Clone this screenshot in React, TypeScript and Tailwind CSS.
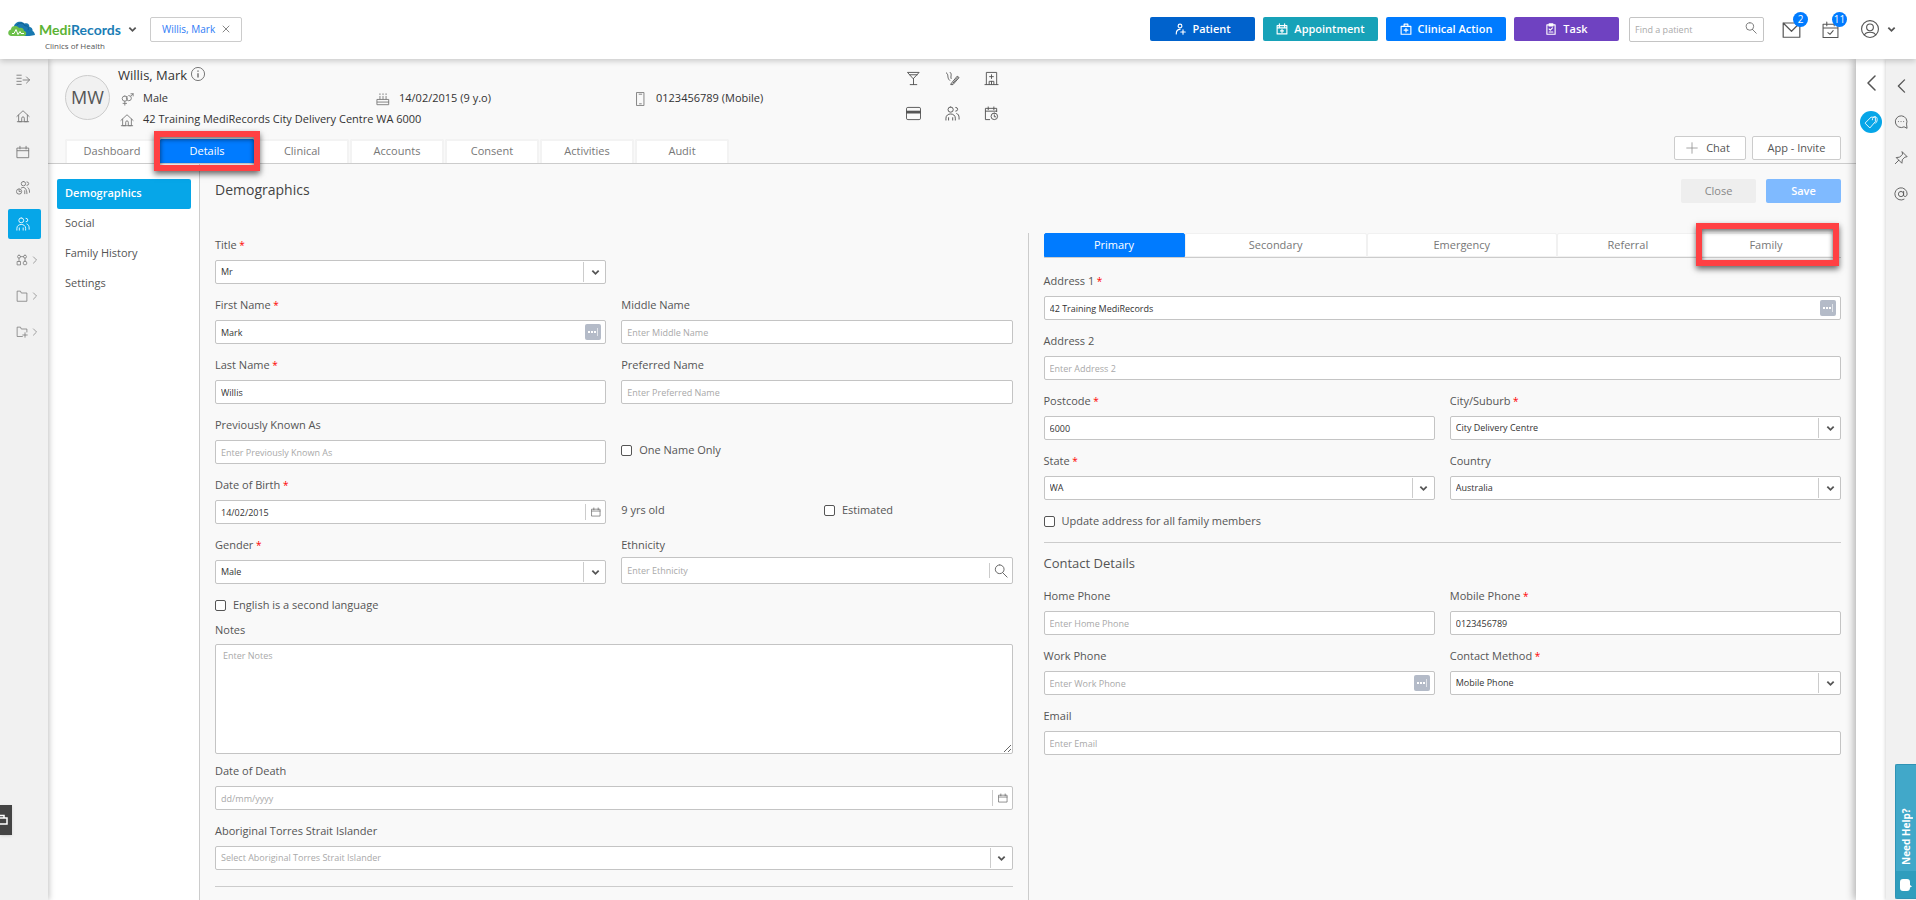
import { useId } from "react"
import type { ReactNode } from "react"

type IconProps = { d: string; size?: string; className?: string; weight?: number }

const Icon = ({ d, size = "size-4", className = "", weight = 1 }: IconProps) => (
  <svg
    viewBox="0 0 16 16"
    className={`${size} shrink-0 ${className}`}
    fill="none"
    stroke="currentColor"
    strokeWidth={weight}
    strokeLinecap="round"
    strokeLinejoin="round"
    aria-hidden="true"
  >
    <path d={d} />
  </svg>
)

const ICONS = {
  collapse: "M1 2.500h5M1 6h5M1 9.500h5M1 13h5M8 8h7.500M12 4.500l3.500 3.500l-3.500 3.500",
  home: "M1 8.500L8 2l7 6.500M3 7v7.500h3.500v-4a1.500 1.500 0 0 1 3 0v4H13V7M1.500 14.500h13",
  calendar: "M1.500 3.500h13v11h-13zM1.500 6.500h13M4.500 1.500v3M11.500 1.500v3",
  waiting: "M8.500 .5a2.500 2.500 0 1 1 0 5a2.500 2.500 0 1 1 0 -5M12.500 1a2 2 0 0 1 0 4M3.500 9a3 3 0 1 1 0 6a3 3 0 1 1 0 -6M3.500 10.500v1.500h1.500M6 8c3-2 6.500 0 6.500 6.500M10 11v3.500M13.500 7.500c1.500 1 2 3 2 5.500",
  people: "M6 1a2.800 2.800 0 1 1 0 5.600a2.800 2.800 0 1 1 0 -5.600M11.500 1.500a2 2 0 1 1 0 4M1 15v-2c0-6 10-6 10 0V15M3.800 15v-2.500M8.200 15v-2.500M12.500 8c1.500 .5 2.500 2 2.500 4.500v1.500",
  modules: "M4 1.500a2 2 0 1 1 0 4a2 2 0 1 1 0 -4M12 1.500a2 2 0 1 1 0 4a2 2 0 1 1 0 -4M6 3.500h4M2 10h4v4.500H2zM12 9.500a2.500 2.500 0 1 1 0 5a2.500 2.500 0 1 1 0 -5M4 5.500V10M12 5.500v4",
  folder: "M1.500 14.500v-13h4.500l1 2.500h7.500v10.500z",
  folderPlus: "M8.500 14H1.500v-12.500h4.500l1 2.500h7.500V8M12 9v6M9 12h6",
  gender: "M5.500 4.500a3 3 0 1 1 0 6a3 3 0 1 1 0 -6M10 4a3 3 0 1 1 0 6a3 3 0 0 1 -2 -5M12.500 4.500L15 2M12.500 2H15v2.500M5.500 10.500v4.500M3.500 13h4",
  cake: "M1.500 8.500h13v6h-13zM1.500 11.500h13M4.500 5v3M8 5v3M11.500 5v3M4.500 2v1M8 2v1M11.500 2v1",
  phone: "M4.500 .5h8v15h-8zM7 2.500h3M7.500 13.500h2",
  glass: "M2 1.500h12L8 8zM4 4h8M8 8v6.500M4.500 14.500h7",
  smoke: "M1.500 2c3 2 0 5 3.500 8M5.500 1.500c2.500 2 0 4 1 6.500M6.500 13.500l6.500-8l2 1.500l-6.500 7.500h-2zM8.500 13l5-6",
  hospital: "M2.500 14.500v-13h11v13M1 14.500h14M8 4v4M6 6h4M5.500 14.500v-3.500h5v3.500M8 11v3.500",
  recall: "M13.500 6V2.500h-12v12H6M1.500 5.500h12M4.500 1v3M10.500 1v3M11 7.500a3.500 3.500 0 1 1 0 7a3.500 3.500 0 1 1 0 -7M11 9.500v2h1.500",
  search: "M6.500 1a5 5 0 1 1 0 10a5 5 0 1 1 0 -10M10 10l5 5",
  patientPlus: "M8 1.500a2.500 2.500 0 1 1 0 5a2.500 2.500 0 1 1 0 -5M3 14.500c0-4 1.500-6 5-6M12 9v6M9 12h6",
  calendarPlus: "M1.500 3.500h13v11h-13zM1.500 6.500h13M4.500 1v4M11.500 1v4M8 8.500v4M6 10.500h4",
  clinical: "M1.500 4.500h13v10.500H1.500zM5.500 4.500v-3h5v3M8 7v5M5.500 9.500h5",
  task: "M2.500 2.500h11v12.500h-11zM5.500 1h5v3h-5zM5.500 8l1.500 1.500l3-3M5.500 12h5",
  mail: "M1 2.500h14v12H1zM1 2.500l7 7l7-7",
  calendarCheck: "M1 3h14v12.500H1zM1 6.500h14M4.500 1v3.500M11.500 1v3.500M5.500 11l2 1.500l3-3.500",
  user: "M8 .5a7.500 7.500 0 1 1 0 15a7.500 7.500 0 1 1 0 -15M8 3.500a3 3 0 1 1 0 6a3 3 0 1 1 0 -6M3 13.500c1-3.500 9-3.500 10 0",
  chat: "M14.500 15l-3-1.500A6.700 6.700 0 1 1 14.500 10zM5 7.500h.1M8 7.500h.1M11 7.500h.1",
  pin: "M9.500 1l5.500 5.500l-2.500 .5l-3 3l-.5 4L2.500 7.500l4-.5l3-3zM5.500 10.500L1.500 14.500",
  at: "M8 5a3 3 0 1 1 0 6a3 3 0 1 1 0 -6M11 5v4.500c0 2 4 2 4-1.500A7 7 0 1 0 11.500 14",
  tag: "M1.500 9l6.500-6.500h5v5L7 14.500zM9.500 5.500c0-5 6-5 5.500 0c0 2-1 3-2 4",
  left: "M12 1L5 8L12 15",
  right: "M5.500 3l5 5l-5 5",
  cross: "M2 2l12 12M14 2L2 14",
  plus: "M8 1v14M1 8h14",
}

const Chevron = ({ className = "" }: { className?: string }) => (
  <svg viewBox="0 0 10 10" className={`size-[9px] shrink-0 ${className}`} fill="none" stroke="currentColor" strokeWidth="2" aria-hidden="true">
    <path d="M1.500 3l3.500 3.500l3.500-3.500" />
  </svg>
)

const Highlight = ({ className = "" }: { className?: string }) => (
  <span
    className={`pointer-events-none absolute z-10 border-6 border-[#ff4043] shadow-[0_3px_6px_rgba(0,0,0,0.6),inset_0_2px_5px_rgba(0,0,0,0.6)] ${className}`}
  />
)

const inputClass =
  "w-full rounded-xs border border-[#c4c4c4] bg-white px-[5px] text-[9px] text-[#333] placeholder:text-[#a9a9a9]"

const Label = ({ id, text, required }: { id: string; text: string; required?: boolean }) => (
  <label htmlFor={id} className="block h-4 text-[11px] leading-4 whitespace-nowrap">
    {text}
    {required && <span className="text-[10px] text-[#f00]"> *</span>}
  </label>
)

type FieldProps = { label: string; value?: string; hint?: string; required?: boolean; filler?: boolean; end?: ReactNode; className?: string }

const TextField = ({ label, value, hint, required, filler, end, className = "" }: FieldProps) => {
  const id = useId()
  return (
    <div className={`flex flex-col gap-[7px] ${className}`}>
      <Label id={id} text={label} required={required} />
      <div className="relative flex">
        <input id={id} className={`h-6 ${inputClass}`} defaultValue={value} placeholder={hint} />
        {filler && (
          <span className="absolute top-1 right-[5px] flex h-4 w-4 items-center justify-center gap-px rounded-xs bg-[#b4bbc8]">
            <i className="size-0.5 bg-white" />
            <i className="size-0.5 bg-white" />
            <i className="size-0.5 bg-white" />
            <i className="h-2 w-px bg-white/60" />
          </span>
        )}
        {end && <span className="absolute inset-y-1 right-0 flex w-[21px] items-center justify-center border-l border-[#ccc]">{end}</span>}
      </div>
    </div>
  )
}

const SearchField = ({ label, hint }: { label: string; hint: string }) => {
  const id = useId()
  return (
    <div className="flex flex-col gap-1">
      <Label id={id} text={label} />
      <div className="relative flex">
        <input id={id} className={`h-[27px] ${inputClass}`} placeholder={hint} />
        <button aria-label={`Search ${label}`} className="absolute inset-y-1.5 right-0 flex w-6 items-center justify-center border-l border-[#ccc]">
          <Icon d={ICONS.search} size="size-3.5" />
        </button>
      </div>
    </div>
  )
}

const SelectField = ({ label, value, required, muted, className = "" }: FieldProps & { muted?: boolean }) => {
  const id = useId()
  return (
    <div className={`flex flex-col gap-[7px] ${className}`}>
      <Label id={id} text={label} required={required} />
      <div className="relative flex">
        <select id={id} className={`h-6 appearance-none ${inputClass} ${muted ? "text-[#a9a9a9]!" : ""}`}>
          <option>{value}</option>
        </select>
        <span className="pointer-events-none absolute inset-y-0.5 right-0 flex w-[23px] items-center justify-center border-l border-[#ccc]">
          <Chevron />
        </span>
      </div>
    </div>
  )
}

const Check = ({ label, className = "" }: { label: string; className?: string }) => (
  <label className={`flex items-center gap-[7px] text-[11px] leading-4 ${className}`}>
    <input type="checkbox" className="size-[11px] appearance-none rounded-xs border border-[#555] bg-white" />
    {label}
  </label>
)

const railItems = [
  { name: "Expand menu", d: ICONS.collapse },
  { name: "Home", d: ICONS.home },
  { name: "Calendar", d: ICONS.calendar },
  { name: "Waiting room", d: ICONS.waiting },
  { name: "Patients", d: ICONS.people, active: true },
  { name: "Modules", d: ICONS.modules, more: true },
  { name: "Files", d: ICONS.folder, more: true },
  { name: "New file", d: ICONS.folderPlus, more: true },
]

const Header = () => (
  <header className="relative z-20 flex h-[59px] shrink-0 items-center bg-white pb-px shadow-[0_2px_6px_rgba(0,0,0,0.2)]">
    <div className="flex w-[142px] flex-col self-start pt-[19px] pl-2">
      <a href="#" className="flex h-5 items-center font-['Lato',sans-serif] text-[14px] font-bold">
        <svg viewBox="0 0 27 16" className="mr-1 h-4 w-[27px]" aria-hidden="true">
          <path d="M6 6C6 1 13-1 16.500 2.500c3-1 5 .5 5 3.500c2 0 3.500 2 3 4c1.500 .5 2 2 2.500 4c-3 1-8 1-12 1z" fill="#1878b0" />
          <path d="M9 4c3-3 7-2 8 1c3-1 4 2 3 4" fill="none" stroke="#0e5f94" strokeWidth="1" />
          <path d="M3.500 15C-1 15-.5 9 3 8.500c0-4 6-4.500 8-1.500c3-1 5 .5 5 3c3 0 3 5 0 5z" fill="#6cc04a" />
          <path d="M4 12.500h2l2-4l2 5l2-3l1 2h3" fill="none" stroke="#fff" strokeWidth="1" />
        </svg>
        <span className="text-[#5cb335]">Medi</span>
        <span className="text-[#1b7db5]">Records</span>
        <Chevron className="ml-[7px] text-[#555]" />
      </a>
      <span className="pt-px pl-[37px] text-[8px] leading-3">Clinics of Health</span>
    </div>
    <button className="ml-2 flex h-[25px] items-center gap-[7px] rounded-xs border border-[#ccc] px-[11px] text-[10px] text-[#2f7bf6]">
      Willis, Mark
      <Icon d={ICONS.cross} size="size-2" weight={2} className="text-[#888]" />
    </button>
    <div className="ml-auto flex items-center gap-2 text-[11px] font-semibold text-white">
      <button className="flex h-6 w-[105px] items-center justify-center gap-1.5 rounded-xs bg-[#0062cc]">
        <Icon d={ICONS.patientPlus} size="size-3" weight={1.5} /> Patient
      </button>
      <button className="flex h-6 w-[115px] items-center justify-center gap-1.5 rounded-xs bg-[#17a2b8]">
        <Icon d={ICONS.calendarPlus} size="size-3" weight={1.5} /> Appointment
      </button>
      <button className="flex h-6 w-[120px] items-center justify-center gap-1.5 rounded-xs bg-[#007bff]">
        <Icon d={ICONS.clinical} size="size-3" weight={1.5} /> Clinical Action
      </button>
      <button className="flex h-6 w-[105px] items-center justify-center gap-1.5 rounded-xs bg-[#6f42c1]">
        <Icon d={ICONS.task} size="size-3" weight={1.5} /> Task
      </button>
    </div>
    <div className="relative ml-2.5">
      <input aria-label="Find a patient" placeholder="Find a patient" className="block h-[25px] w-[135px] rounded-xs border border-[#c4c4c4] px-[5px] text-[9px] placeholder:text-[#aaa]" />
      <Icon d={ICONS.search} size="size-3" className="absolute top-[5px] right-[7px]" />
    </div>
    <div className="mr-5 ml-[18px] flex items-center">
      <button aria-label="Messages" className="relative">
        <Icon d={ICONS.mail} size="size-[19px]" />
        <span className="absolute -top-2 -right-[7px] flex size-[15px] items-center justify-center rounded-full bg-[#007bff] text-[10px] text-white">2</span>
      </button>
      <button aria-label="Tasks" className="relative ml-[21px]">
        <Icon d={ICONS.calendarCheck} size="size-[17px]" />
        <span className="absolute -top-[9px] -right-2 flex size-[15px] items-center justify-center rounded-full bg-[#007bff] text-[10px] text-white">11</span>
      </button>
      <button aria-label="Account" className="ml-[22px] flex items-center gap-2">
        <Icon d={ICONS.user} size="size-[18px]" />
        <Chevron />
      </button>
    </div>
  </header>
)

const Rail = () => (
  <nav className="z-10 flex w-12 shrink-0 flex-col gap-1.5 bg-[#f1f1f1] pt-1.5 pl-2 shadow-[1px_0_6px_rgba(0,0,0,0.25)]">
    {railItems.map((item) => (
      <button
        key={item.name}
        aria-label={item.name}
        className={`flex h-[30px] w-[33px] items-center rounded-xs pl-2 ${item.active ? "bg-[#06a6e8] text-white" : "text-[#777]"}`}
      >
        <Icon d={item.d} size={item.more ? "size-3" : "size-3.5"} />
        {item.more && <Icon d={ICONS.right} size="size-2.5" weight={1.5} className="ml-0.5 text-[#999]" />}
      </button>
    ))}
  </nav>
)

const PatientHeader = () => (
  <section className="flex h-[105px] shrink-0 flex-col border-b border-[#ccc] pl-[17px]">
    <div className="flex h-[75px] pt-4">
      <div className="flex size-[45px] items-center justify-center rounded-full border border-[#ccc] bg-[#f1f1f1] text-[18px]">MW</div>
      <div className="-mt-3 flex flex-1 flex-col pl-2 text-[11px] text-[#333]">
        <div className="flex h-6 items-center gap-1.5 pt-0.5 text-[13px]">
          Willis, Mark
          <svg viewBox="0 0 16 16" className="mb-1 -ml-0.5 size-3.5" fill="none" stroke="#666" aria-hidden="true">
            <circle cx="8" cy="8" r="7.500" />
            <path d="M8 7v5M8 4v1.500" strokeWidth="1.500" />
          </svg>
        </div>
        <div className="flex h-[22px] items-center pt-px">
          <span className="flex w-[258px] items-center gap-[9px] pl-0.5">
            <Icon d={ICONS.gender} size="size-3.5" className="text-[#777]" /> Male
          </span>
          <span className="flex w-[257px] items-center gap-[9px]">
            <Icon d={ICONS.cake} size="size-3.5" className="text-[#777]" /> 14/02/2015 (9 y.o)
          </span>
          <span className="flex items-center gap-[9px]">
            <Icon d={ICONS.phone} size="size-3.5" className="text-[#777]" /> 0123456789 (Mobile)
          </span>
        </div>
        <div className="flex h-[21px] items-center gap-[9px] pl-0.5">
          <Icon d={ICONS.home} size="size-3.5" className="text-[#777]" /> 42 Training MediRecords City Delivery Centre WA 6000
        </div>
      </div>
      <div className="-mt-1 mr-auto grid h-[50px] w-[950px] grid-cols-[39px_39px_39px] content-between text-[#555]">
        <Icon d={ICONS.glass} size="size-[15px]" />
        <Icon d={ICONS.smoke} size="size-[15px]" />
        <Icon d={ICONS.hospital} size="size-[15px]" />
        <svg viewBox="0 0 16 16" className="size-[15px]" fill="none" stroke="currentColor" aria-hidden="true">
          <rect x="0.500" y="1.500" width="15" height="13" rx="1.500" />
          <path d="M0 6.500h16" strokeWidth="3" />
        </svg>
        <Icon d={ICONS.people} size="size-[15px]" />
        <Icon d={ICONS.recall} size="size-[15px]" />
      </div>
    </div>
    <div className="flex h-[29px] items-end pr-[15px]">
      <nav className="flex gap-px text-[11px] text-[#777]">
        {["Dashboard", "Details", "Clinical", "Accounts", "Consent", "Activities", "Audit"].map((tab) => (
          <a
            key={tab}
            href="#"
            className={`relative flex h-6 w-[94px] items-center justify-center rounded-t-xs border-2 border-b-0 pb-0.5 ${tab === "Details" ? "border-[#007bff] bg-[#007bff] text-white" : "border-[#f3f3f3] bg-white"}`}
          >
            {tab}
            {tab === "Details" && <Highlight className="-inset-x-2 -top-2.5 -bottom-2" />}
          </a>
        ))}
      </nav>
      <div className="mb-[3px] ml-auto flex gap-1.5 text-[11px]">
        <button className="flex h-6 w-[72px] items-center justify-center gap-2 rounded-xs border border-[#ccc] bg-white pr-1">
          <Icon d={ICONS.plus} size="size-3" className="text-[#888]" /> Chat
        </button>
        <button className="h-6 w-[89px] rounded-xs border border-[#ccc] bg-white">App - Invite</button>
      </div>
    </div>
  </section>
)

const PersonalForm = () => {
  const notesId = useId()
  return (
    <div className="grid min-w-0 flex-1 grid-cols-2 content-start gap-x-[15px] gap-y-[13px] pt-1 pr-[15px]">
      <SelectField label="Title" value="Mr" required />
      <span />
      <TextField label="First Name" value="Mark" required filler />
      <TextField label="Middle Name" hint="Enter Middle Name" />
      <TextField label="Last Name" value="Willis" required />
      <TextField label="Preferred Name" hint="Enter Preferred Name" />
      <TextField label="Previously Known As" hint="Enter Previously Known As" />
      <Check label="One Name Only" className="mb-1.5 h-4 self-end" />
      <TextField label="Date of Birth" value="14/02/2015" required end={<Icon d={ICONS.calendar} size="size-2.5" />} />
      <div className="mb-1.5 grid h-4 grid-cols-2 self-end text-[11px] leading-4">
        <span>9 yrs old</span>
        <Check label="Estimated" className="pl-[7px]" />
      </div>
      <SelectField label="Gender" value="Male" required />
      <SearchField label="Ethnicity" hint="Enter Ethnicity" />
      <Check label="English is a second language" className="col-span-2" />
      <div className="col-span-2 -mt-1 flex flex-col gap-1.5">
        <Label id={notesId} text="Notes" />
        <textarea id={notesId} placeholder="Enter Notes" className="h-[110px] w-full rounded-xs border border-[#c4c4c4] bg-white px-[7px] py-1 text-[9px] placeholder:text-[#a9a9a9]" />
      </div>
      <TextField label="Date of Death" hint="dd/mm/yyyy" className="col-span-2 -mt-1" end={<Icon d={ICONS.calendar} size="size-2.5" />} />
      <SelectField label="Aboriginal Torres Strait Islander" value="Select Aboriginal Torres Strait Islander" muted className="col-span-2" />
      <hr className="col-span-2 mt-[3px] border-[#ccc]" />
    </div>
  )
}

const ContactForm = () => (
  <div className="min-w-0 grow basis-0.5 border-l border-[#ccc] pl-[15px]">
    <nav className="grid grid-cols-[141fr_182fr_190fr_142fr_134fr_8fr] border-b border-[#ccc] text-[11px] text-[#777]">
      {["Primary", "Secondary", "Emergency", "Referral", "Family"].map((tab) => (
        <a
          key={tab}
          href="#"
          className={`relative flex h-6 items-center justify-center rounded-t-xs border ${tab === "Primary" ? "border-[#007bff] bg-[#007bff] text-white" : "border-[#f1f1f1] bg-white"}`}
        >
          {tab}
          {tab === "Family" && <Highlight className="-top-[11px] -right-[7px] -bottom-2.5 -left-1" />}
        </a>
      ))}
    </nav>
    <div className="grid grid-cols-2 gap-x-[15px] gap-y-[13px] pt-[15px]">
      <TextField label="Address 1" value="42 Training MediRecords" required filler className="col-span-2" />
      <TextField label="Address 2" hint="Enter Address 2" className="col-span-2" />
      <TextField label="Postcode" value="6000" required />
      <SelectField label="City/Suburb" value="City Delivery Centre" required />
      <SelectField label="State" value="WA" required />
      <SelectField label="Country" value="Australia" />
      <Check label="Update address for all family members" className="col-span-2" />
    </div>
    <hr className="mt-[13px] border-[#ccc]" />
    <h2 className="pt-3 pb-[17px] text-[13px] leading-4">Contact Details</h2>
    <div className="grid grid-cols-2 gap-x-[15px] gap-y-[13px]">
      <TextField label="Home Phone" hint="Enter Home Phone" />
      <TextField label="Mobile Phone" value="0123456789" required />
      <TextField label="Work Phone" hint="Enter Work Phone" filler />
      <SelectField label="Contact Method" value="Mobile Phone" required />
      <TextField label="Email" hint="Enter Email" className="col-span-2" />
    </div>
  </div>
)

const App = () => {
  return (
    <div className="relative flex h-screen flex-col overflow-hidden bg-[#f9f9f9] font-['Open_Sans',sans-serif] text-[#555]">
      <Header />
      <div className="flex min-h-0 flex-1">
        <Rail />
        <main className="flex min-w-0 flex-1 flex-col">
          <PatientHeader />
          <div className="flex min-h-0 flex-1">
            <nav className="flex w-[152px] shrink-0 flex-col border-r border-[#ccc] bg-white pt-[15px] pr-2 pl-[9px] text-[11px]">
              {["Demographics", "Social", "Family History", "Settings"].map((item) => (
                <a key={item} href="#" className={`flex h-[30px] items-center rounded-xs px-2 pb-0.5 ${item === "Demographics" ? "bg-[#06a6e8] font-semibold text-white" : ""}`}>
                  {item}
                </a>
              ))}
            </nav>
            <div className="flex min-w-0 flex-1 flex-col px-[15px]">
              <div className="flex h-[69px] shrink-0 items-start pt-[15px]">
                <h1 className="text-[14px] leading-[22px] text-[#444]">Demographics</h1>
                <div className="ml-auto flex gap-2.5 text-[11px]">
                  <button className="h-6 w-[75px] rounded-xs bg-[#eee] text-[#888]">Close</button>
                  <button className="h-6 w-[75px] rounded-xs bg-[#7fbaff] font-semibold text-white">Save</button>
                </div>
              </div>
              <div className="flex min-h-0 flex-1">
                <PersonalForm />
                <ContactForm />
              </div>
            </div>
          </div>
        </main>
        <aside className="z-10 flex w-[30px] shrink-0 flex-col items-center gap-5 bg-white pt-4 shadow-[-2px_0_8px_rgba(0,0,0,0.3)]">
          <button aria-label="Expand panel">
            <Icon d={ICONS.left} weight={1.5} />
          </button>
          <button aria-label="Tags" className="flex size-[22px] items-center justify-center rounded-full bg-[#06a6e8] text-white">
            <Icon d={ICONS.tag} size="size-3.5" />
          </button>
        </aside>
        <aside className="z-10 flex w-[30px] shrink-0 flex-col items-center gap-[22px] bg-[#f1f1f1] pt-5 shadow-[-1px_0_3px_rgba(0,0,0,0.15)]">
          <button aria-label="Expand sidebar">
            <Icon d={ICONS.left} size="size-3.5" weight={1.5} />
          </button>
          <button aria-label="Chat">
            <Icon d={ICONS.chat} size="size-3.5" />
          </button>
          <button aria-label="Pinned">
            <Icon d={ICONS.pin} size="size-3.5" />
          </button>
          <button aria-label="Mentions">
            <Icon d={ICONS.at} size="size-3.5" />
          </button>
        </aside>
      </div>
      <button aria-label="Open drawer" className="absolute bottom-[65px] left-0 z-20 flex h-[30px] w-3 items-center bg-[#444] text-white shadow">
        <svg viewBox="0 0 8 12" className="h-3 w-2" fill="none" stroke="currentColor" strokeWidth="1.500" aria-hidden="true">
          <path d="M0 4h7v6H0M0 1.500h4V4" />
        </svg>
      </button>
      <button className="absolute right-0 bottom-px z-20 flex h-[135px] w-[21px] flex-col items-center rounded-l-xs border border-r-0 border-[#2f93b5] bg-[#41a8c9] text-[10px] font-bold text-white">
        <span className="flex flex-1 rotate-180 items-center pt-1.5 [writing-mode:vertical-rl]">Need Help?</span>
        <span className="flex h-[27px] w-full items-center justify-center bg-[#2f9dbd]">
          <svg viewBox="0 0 12 14" className="h-3.5 w-3" fill="#fff" aria-hidden="true">
            <path d="M3 1h4c2 0 3 1 3 3v3l2 1.500l-2 1c0 2.500-1 3.500-3 3.500H3c-2 0-3-1-3-3V4c0-2 1-3 3-3z" />
          </svg>
        </span>
      </button>
    </div>
  )
}

export default App
